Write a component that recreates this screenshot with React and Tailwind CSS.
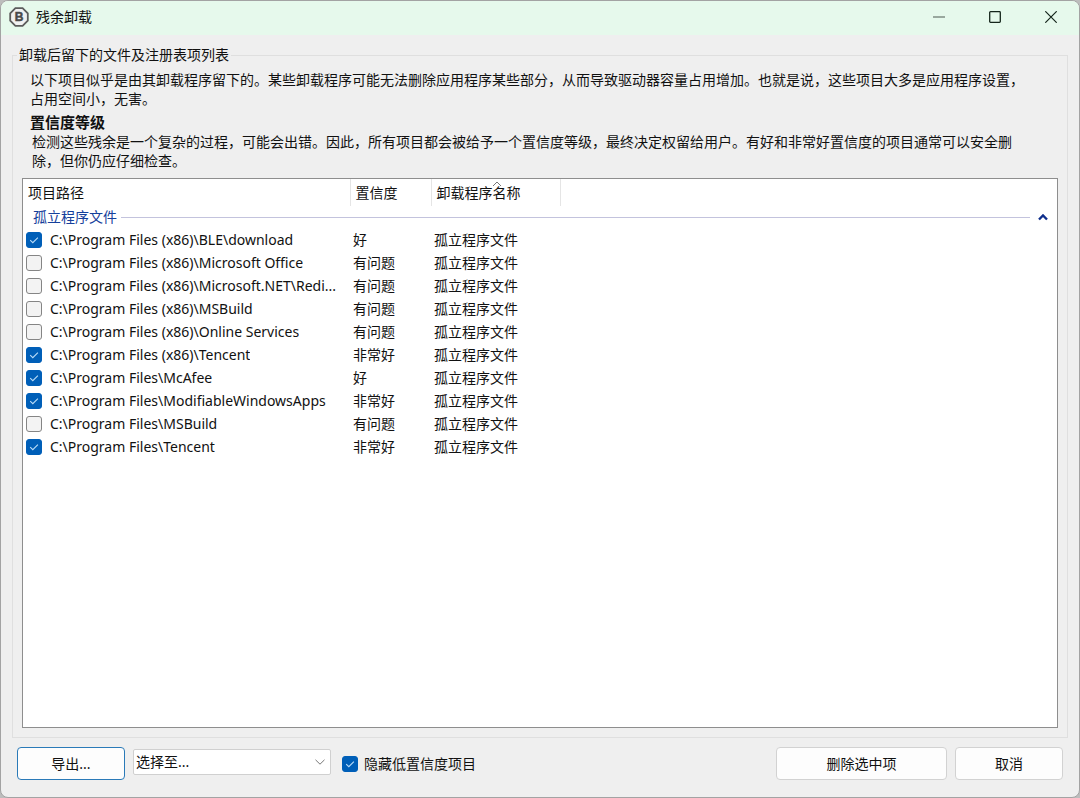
import React, { useState } from 'react';

const ORPHAN = '孤立程序文件';

const INITIAL_ITEMS = [
  { id: 1, path: 'C:\\Program Files (x86)\\BLE\\download', confidence: '好', checked: true },
  { id: 2, path: 'C:\\Program Files (x86)\\Microsoft Office', confidence: '有问题', checked: false },
  { id: 3, path: 'C:\\Program Files (x86)\\Microsoft.NET\\Redi...', confidence: '有问题', checked: false },
  { id: 4, path: 'C:\\Program Files (x86)\\MSBuild', confidence: '有问题', checked: false },
  { id: 5, path: 'C:\\Program Files (x86)\\Online Services', confidence: '有问题', checked: false },
  { id: 6, path: 'C:\\Program Files (x86)\\Tencent', confidence: '非常好', checked: true },
  { id: 7, path: 'C:\\Program Files\\McAfee', confidence: '好', checked: true },
  { id: 8, path: 'C:\\Program Files\\ModifiableWindowsApps', confidence: '非常好', checked: true },
  { id: 9, path: 'C:\\Program Files\\MSBuild', confidence: '有问题', checked: false },
  { id: 10, path: 'C:\\Program Files\\Tencent', confidence: '非常好', checked: true },
];

const Checkbox = ({ id, checked, onChange }) => (
  <span className="relative flex h-4 w-4 shrink-0">
    <input
      id={id}
      type="checkbox"
      checked={checked}
      onChange={onChange}
      className="h-4 w-4 appearance-none rounded-[3px] border border-[#858585] bg-[#f3f3f3] checked:border-[#005fb8] checked:bg-[#005fb8]"
    />
    {checked && (
      <svg viewBox="0 0 16 16" className="pointer-events-none absolute inset-0 h-4 w-4" fill="none" stroke="#b9dcf8" strokeWidth="1.1">
        <path d="M4.2 8.2 L6.8 10.7 L11.9 5.6" />
      </svg>
    )}
  </span>
);

const TitleBar = () => (
  <header className="flex h-[34px] items-center bg-[#e6f9ec] pb-0.5 pl-2">
    <svg viewBox="0 0 20 20" className="mr-[7px] h-5 w-5">
      <path d="M6.4 1.2h7.2l5.2 5.2v7.2l-5.2 5.2H6.4l-5.2-5.2V6.4z" fill="#f1f1f1" stroke="#5c5c5c" strokeWidth="1.8" />
      <text x="10" y="14.2" textAnchor="middle" fontFamily="Liberation Sans, sans-serif" fontWeight="bold" fontSize="12" fill="#4a4a4a" stroke="#4a4a4a" strokeWidth="0.5">
        B
      </text>
    </svg>
    <h1 className="flex-1">残余卸载</h1>
    <button type="button" aria-label="最小化" className="flex h-8 w-14 items-center justify-center">
      <svg viewBox="0 0 12 12" className="h-3 w-3" stroke="#7f8c84" strokeWidth="1.4">
        <path d="M0 6h12" />
      </svg>
    </button>
    <button type="button" aria-label="最大化" className="flex h-8 w-14 items-center justify-center">
      <svg viewBox="0 0 12 12" className="h-3 w-3" fill="none" stroke="#15251b" strokeWidth="1.3">
        <rect x="0.7" y="0.7" width="10.6" height="10.6" rx="0.8" />
      </svg>
    </button>
    <button type="button" aria-label="关闭" className="flex h-8 w-14 items-center justify-center">
      <svg viewBox="0 0 12 12" className="h-3 w-3" fill="none" stroke="#15251b" strokeWidth="1.2">
        <path d="M0.3 0.3l11.4 11.4M11.7 0.3L0.3 11.7" />
      </svg>
    </button>
  </header>
);

const App = () => {
  const [items, setItems] = useState(INITIAL_ITEMS);
  const [hideLow, setHideLow] = useState(true);
  const [expanded, setExpanded] = useState(true);

  const toggleItem = (id) => {
    setItems(items.map((item) => (item.id === id ? { ...item, checked: !item.checked } : item)));
  };

  return (
    <div className="flex min-h-screen bg-[#bdbdbd] font-['Noto_Sans','Noto_Sans_CJK_SC',sans-serif] text-sm text-[#111]">
      <div className="flex flex-1 flex-col overflow-hidden rounded-lg border border-[#a3a3a3] bg-[#efefef]">
        <TitleBar />

        <main className="flex flex-1 flex-col px-[11px] pt-2.5">
          <fieldset className="flex flex-1 flex-col border border-[#dfdfdf] px-[9px] pb-[9px]">
            <legend className="ml-[-5px] px-0.5 leading-5">卸载后留下的文件及注册表项列表</legend>

            {/* Explanation */}
            <div className="pt-[5px] pr-6 pl-2 leading-[19px]">
              <p>
                以下项目似乎是由其卸载程序留下的。某些卸载程序可能无法删除应用程序某些部分，从而导致驱动器容量占用增加。也就是说，这些项目大多是应用程序设置，占用空间小，无害。
              </p>
              <h2 className="pt-[5px] text-[15px] leading-[19px] font-bold">置信度等级</h2>
              <p className="pl-0.5">
                检测这些残余是一个复杂的过程，可能会出错。因此，所有项目都会被给予一个置信度等级，最终决定权留给用户。有好和非常好置信度的项目通常可以安全删除，但你仍应仔细检查。
              </p>
            </div>

            {/* Leftover items */}
            <div className="mt-2 flex-1 border border-[#8e8e8e] bg-white">
              <table className="w-full table-fixed border-collapse text-left">
                <colgroup>
                  <col className="w-[327px]" />
                  <col className="w-[81px]" />
                  <col className="w-[129px]" />
                  <col />
                </colgroup>
                <thead>
                  <tr className="h-[27px]">
                    <th className="border-r border-[#e5e5e5] p-0 pl-[5px] font-normal">项目路径</th>
                    <th className="border-r border-[#e5e5e5] p-0 pl-[5px] font-normal">置信度</th>
                    <th className="relative border-r border-[#e5e5e5] p-0 pl-[5px] font-normal">
                      卸载程序名称
                      <svg viewBox="0 0 10 6" className="absolute top-0.5 left-15 h-1.5 w-2.5" fill="none" stroke="#777">
                        <path d="M1 5l4-4 4 4" />
                      </svg>
                    </th>
                    <th />
                  </tr>
                </thead>
                <tbody>
                  <tr className="h-[22px]">
                    <th colSpan={4} className="p-0 pr-[9px] pl-2.5 font-normal text-[#15409b]">
                      <div className="flex items-center leading-5">
                        {ORPHAN}
                        <span className="mr-2 ml-1 h-px flex-1 bg-[#c3c3dd]" />
                        <button type="button" aria-label="折叠" onClick={() => setExpanded(!expanded)}>
                          <svg viewBox="0 0 10 8" className="h-2 w-2.5" fill="none" stroke="#0f2f8c" strokeWidth="2.4">
                            <path d="M1 6.5l4-4 4 4" />
                          </svg>
                        </button>
                      </div>
                    </th>
                  </tr>
                  {expanded &&
                    items.map((item) => (
                      <tr key={item.id} className="h-[23px] leading-5">
                        <td className="p-0 pl-[3px]">
                          <div className="flex items-center gap-2">
                            <Checkbox id={`item-${item.id}`} checked={item.checked} onChange={() => toggleItem(item.id)} />
                            <label htmlFor={`item-${item.id}`} className="truncate">
                              {item.path}
                            </label>
                          </div>
                        </td>
                        <td className="p-0 pl-[3px]">{item.confidence}</td>
                        <td className="p-0 pl-[3px]">{ORPHAN}</td>
                        <td />
                      </tr>
                    ))}
                </tbody>
              </table>
            </div>
          </fieldset>
        </main>

        {/* Actions */}
        <footer className="flex items-center px-4 pt-[9px] pb-[17px]">
          <button type="button" className="h-[33px] w-27 rounded-sm border border-[#2a7ab8] bg-[#fdfdfd]">
            导出...
          </button>
          <div className="relative mb-1 ml-2 w-[198px]">
            <select aria-label="选择至" className="block h-[26px] w-full appearance-none rounded-xs border border-[#d0d0d0] bg-white pl-0.5">
              <option>选择至...</option>
            </select>
            <svg viewBox="0 0 10 6" className="pointer-events-none absolute top-2.5 right-1.5 h-1.5 w-2.5" fill="none" stroke="#777">
              <path d="M0.5 0.8l4.5 4.4 4.5-4.4" />
            </svg>
          </div>
          <div className="ml-[11px] flex flex-1 items-center gap-1.5">
            <Checkbox id="hide-low" checked={hideLow} onChange={() => setHideLow(!hideLow)} />
            <label htmlFor="hide-low">隐藏低置信度项目</label>
          </div>
          <button type="button" className="h-[33px] w-[171px] rounded-sm border border-[#d2d2d2] bg-[#fdfdfd]">
            删除选中项
          </button>
          <button type="button" className="ml-2 h-[33px] w-27 rounded-sm border border-[#d2d2d2] bg-[#fdfdfd]">
            取消
          </button>
        </footer>
      </div>
    </div>
  );
};

export default App;
